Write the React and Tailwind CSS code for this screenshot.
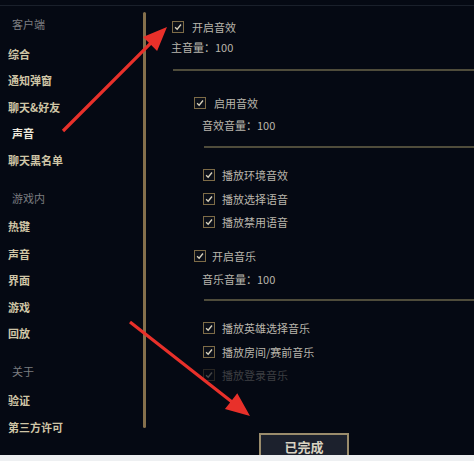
// 客户端设置：声音页
const nav = [
  { t: '客户端', kind: 'head', mt: 0 },
  { t: '综合', mt: 3.5 },
  { t: '通知弹窗' },
  { t: '聊天&好友' },
  { t: '声音', active: true },
  { t: '聊天黑名单' },
  { t: '游戏内', kind: 'head', mt: 11.5 },
  { t: '热键', mt: 1.5 },
  { t: '声音', mt: 1.5 },
  { t: '界面' },
  { t: '游戏' },
  { t: '回放' },
  { t: '关于', kind: 'head', mt: 11.5 },
  { t: '验证', mt: 2.5 },
  { t: '第三方许可' },
]

function Check({ off }) {
  return (
    <span
      className={`flex h-[12px] w-[12px] shrink-0 items-center justify-center border border-[#7d6b47] bg-[#0b0f18] ${off ? 'opacity-40' : ''}`}
    >
      <svg viewBox="0 0 12 12" className="h-[10px] w-[10px]">
        <path d="M2.5 6.2 L5 8.6 L9.6 3" fill="none" stroke="#d9d2bd" strokeWidth="1.6" />
      </svg>
    </span>
  )
}

function Row({ label, mt, x, gap = 'gap-[8px]', off }) {
  return (
    <div className={`flex h-[14px] shrink-0 items-center ${gap} ${off ? 'opacity-30' : ''}`} style={{ marginTop: mt, marginLeft: x }}>
      <Check />
      <span className="text-[11px] leading-none text-[#b9b6ac]">{label}</span>
    </div>
  )
}

function Line({ mt, x }) {
  return <div className="h-[2px] shrink-0 bg-[#4f4c3b]" style={{ marginTop: mt, marginLeft: x }} />
}

function Arrow({ x1, y1, x2, y2 }) {
  const dx = x2 - x1
  const dy = y2 - y1
  const len = Math.hypot(dx, dy)
  const ux = dx / len
  const uy = dy / len
  const px = -uy
  const py = ux
  const hl = 24
  const hw = 10
  const sw = 1.6
  const bx = x2 - ux * hl
  const by = y2 - uy * hl
  const pts = [
    [x1 + px * sw, y1 + py * sw],
    [bx + px * sw, by + py * sw],
    [bx + px * hw, by + py * hw],
    [x2, y2],
    [bx - px * hw, by - py * hw],
    [bx - px * sw, by - py * sw],
    [x1 - px * sw, y1 - py * sw],
  ]
  return <polygon points={pts.map((p) => p.join(',')).join(' ')} fill="#e8302a" />
}

export default function App() {
  return (
    <div className="relative flex h-[461px] w-[474px] flex-col overflow-hidden bg-[#050913] font-['Noto_Sans_CJK_SC',sans-serif]">
      <div className="h-[6px] shrink-0 border-b border-[#1a202b]" />
      <div className="flex h-[449px] overflow-hidden">
        {/* 左侧导航 */}
        <div className="flex w-[143px] shrink-0 flex-col pl-[8px] pt-[5px]">
          {nav.map((n, i) => (
            <div
              key={i}
              className={`flex h-[26.5px] shrink-0 items-center text-[11px] leading-none ${
                n.kind === 'head'
                  ? 'pl-[4px] text-[#7c7d80]'
                  : n.active
                    ? 'pl-[4px] font-bold text-[#ece8dc]'
                    : 'font-bold text-[#cfc5a6]'
              }`}
              style={{ marginTop: n.mt || 0 }}
            >
              {n.t}
            </div>
          ))}
        </div>
        {/* 金色竖条 */}
        <div className="mt-[6px] h-[416px] w-[3px] shrink-0 rounded-full bg-[#85704c]" />
        {/* 内容 */}
        <div className="flex min-w-0 flex-1 flex-col">
          <Row label="开启音效" mt={14} x={26} />
          <div className="ml-[25px] mt-[6px] flex h-[14px] shrink-0 items-center text-[11px] leading-none text-[#b9b6ac]">主音量：100</div>
          <Line mt={15} x={27} />
          <Row label="启用音效" mt={25} x={48} />
          <div className="ml-[56px] mt-[8px] flex h-[14px] shrink-0 items-center text-[11px] leading-none text-[#b9b6ac]">音效音量：100</div>
          <Line mt={14} x={58} />
          <Row label="播放环境音效" mt={20} x={57} gap="gap-[7px]" />
          <Row label="播放选择语音" mt={10} x={57} gap="gap-[7px]" />
          <Row label="播放禁用语音" mt={9} x={57} gap="gap-[7px]" />
          <Row label="开启音乐" mt={20} x={48} gap="gap-[6px]" />
          <div className="ml-[56px] mt-[9px] flex h-[14px] shrink-0 items-center text-[11px] leading-none text-[#b9b6ac]">音乐音量：100</div>
          <Line mt={13} x={58} />
          <Row label="播放英雄选择音乐" mt={20} x={57} gap="gap-[7px]" />
          <Row label="播放房间/赛前音乐" mt={10} x={57} gap="gap-[7px]" />
          <Row label="播放登录音乐" mt={9} x={57} gap="gap-[7px]" off />
          <div className="ml-[113px] mt-[51px] flex h-[30px] w-[90px] shrink-0 items-start justify-center border-2 border-[#9a8c6c] bg-[#1c212d] pt-[5px] text-[13px] font-bold leading-[13px] text-[#d9d3c2]">
            已完成
          </div>
        </div>
      </div>
      <div className="h-[6px] shrink-0 bg-[#eef0f2]" />
      {/* 标注箭头 */}
      <svg className="pointer-events-none absolute left-0 top-0" width="474" height="461">
        <Arrow x1={63} y1={131} x2={167} y2={27} />
        <Arrow x1={130} y1={322} x2={250} y2={416} />
      </svg>
    </div>
  )
}
